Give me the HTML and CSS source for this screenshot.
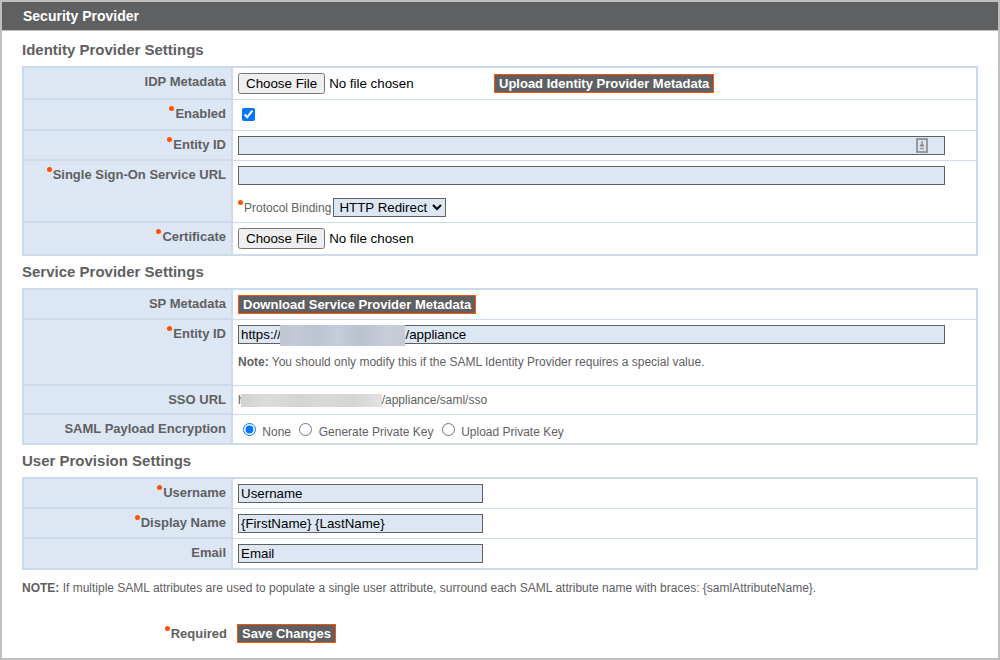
FILE: index.html
```html
<!DOCTYPE html>
<html lang="en">
<head>
<meta charset="utf-8">
<title>Security Provider</title>
<link rel="stylesheet" href="styles.css">
</head>
<body>
<main class="panel">
  <h1 class="panel-title">Security Provider</h1>
  <form class="content">
    <h2 class="section-title">Identity Provider Settings</h2>
    <div class="settings">
      <div class="row">
        <div class="name"><label for="idp-metadata">IDP Metadata</label></div>
        <div class="value inline">
          <input class="file" type="file" id="idp-metadata">
          <button class="action" type="button">Upload Identity Provider Metadata</button>
        </div>
      </div>
      <div class="row">
        <div class="name"><label class="required" for="enabled">Enabled</label></div>
        <div class="value inline"><input class="check" type="checkbox" id="enabled" checked></div>
      </div>
      <div class="row">
        <div class="name"><label class="required" for="idp-entity">Entity ID</label></div>
        <div class="value">
          <div class="field">
            <input class="text" type="text" id="idp-entity">
            <svg class="autofill" viewBox="0 0 12 15" aria-hidden="true">
              <rect x="1" y="1" width="10" height="13" fill="#dfe4ec" stroke="#85878b" stroke-width="1.6"/>
              <path d="M6 3v4" stroke="#8b8d91" stroke-width="1.4"/>
              <path d="M4 7.5h4" stroke="#77797d" stroke-width="1.6"/>
              <path d="M4 10.5h4" stroke="#a4a7ac" stroke-width="2"/>
            </svg>
          </div>
        </div>
      </div>
      <div class="row">
        <div class="name"><label class="required" for="sso-service">Single Sign-On Service URL</label></div>
        <div class="value">
          <div class="field"><input class="text" type="text" id="sso-service"></div>
          <div class="binding">
            <label class="required" for="binding">Protocol Binding</label>
            <select class="select" id="binding"><option>HTTP Redirect</option><option>HTTP POST</option></select>
          </div>
        </div>
      </div>
      <div class="row">
        <div class="name"><label class="required" for="certificate">Certificate</label></div>
        <div class="value inline"><input class="file" type="file" id="certificate"></div>
      </div>
    </div>

    <h2 class="section-title">Service Provider Settings</h2>
    <div class="settings">
      <div class="row">
        <div class="name">SP Metadata</div>
        <div class="value inline"><button class="action" type="button">Download Service Provider Metadata</button></div>
      </div>
      <div class="row">
        <div class="name"><label class="required" for="sp-entity">Entity ID</label></div>
        <div class="value">
          <div class="field">
            <input class="text" type="text" id="sp-entity" value="https://access.example.com/appliance">
            <span class="redaction"></span>
          </div>
          <p class="hint"><b>Note:</b> You should only modify this if the SAML Identity Provider requires a special value.</p>
        </div>
      </div>
      <div class="row compact">
        <div class="name">SSO URL</div>
        <div class="value url">h<span class="smudge"></span>/appliance/saml/sso</div>
      </div>
      <div class="row">
        <div class="name" id="encryption">SAML Payload Encryption</div>
        <div class="value radios" role="radiogroup" aria-labelledby="encryption">
          <input type="radio" name="enc" id="enc-none" checked>
          <label for="enc-none">None</label>
          <input type="radio" name="enc" id="enc-generate">
          <label for="enc-generate">Generate Private Key</label>
          <input type="radio" name="enc" id="enc-upload">
          <label for="enc-upload">Upload Private Key</label>
        </div>
      </div>
    </div>

    <h2 class="section-title">User Provision Settings</h2>
    <div class="settings">
      <div class="row">
        <div class="name"><label class="required" for="username">Username</label></div>
        <div class="value"><input class="text short" type="text" id="username" value="Username"></div>
      </div>
      <div class="row">
        <div class="name"><label class="required" for="display-name">Display Name</label></div>
        <div class="value"><input class="text short" type="text" id="display-name" value="{FirstName} {LastName}"></div>
      </div>
      <div class="row">
        <div class="name"><label for="email">Email</label></div>
        <div class="value"><input class="text short" type="text" id="email" value="Email"></div>
      </div>
    </div>

    <p class="note"><b>NOTE:</b> If multiple SAML attributes are used to populate a single user attribute, surround each SAML attribute name with braces: {samlAttributeName}.</p>
    <div class="footer">
      <div class="legend"><span class="required">Required</span></div>
      <button class="action" type="submit">Save Changes</button>
    </div>
  </form>
</main>
</body>
</html>
```
FILE: styles.css
```css
* {
  box-sizing: border-box;
}

body {
  margin: 0;
  background: #fff;
  color: #5f6062;
  font-family: Arial, "Liberation Sans", sans-serif;
  font-size: 12px;
  line-height: 18px;
}

p, h1, h2 {
  margin: 0;
}

input, button, select {
  font-family: inherit;
}

.panel {
  min-height: 100vh;
  border: 2px solid #bfbfbf;
}

.panel-title {
  padding: 5px 21px;
  border-bottom: 1px solid #bfbfbf;
  background: #5f6062;
  color: #fff;
  font-size: 14px;
}

.content {
  padding: 3px 20px 12px;
}

.section-title {
  padding: 7px 0;
  font-size: 15px;
}

.settings {
  border: 2px solid #ccdbec;
}

.row {
  display: grid;
  grid-template-columns: 209px 1fr;
}

.name {
  padding: 5px;
  border-right: 2px solid #ccdbec;
  border-bottom: 2px solid #ccdbec;
  background: #dde6f3;
  font-size: 13px;
  font-weight: bold;
  text-align: right;
}

.value {
  padding: 5px;
  border-bottom: 1px solid #ccdbec;
}

.row:last-child .name,
.row:last-child .value {
  border-bottom: 0;
}

.compact .name {
  padding-bottom: 4px;
}

.inline {
  display: flex;
  align-items: center;
  gap: 3px;
}

.required::before {
  content: "";
  display: inline-block;
  width: 5px;
  height: 5px;
  margin-right: 1px;
  border-radius: 50%;
  background: #ff5200;
  vertical-align: 7px;
}

.file {
  width: 253px;
  height: 21px;
  color: #000;
}

.check {
  margin: 3px 4px 4px;
}

.action {
  height: 19px;
  padding: 0 4px;
  border: 1px solid #ff5200;
  background: #5f6062;
  color: #fff;
  font-size: 13px;
  font-weight: bold;
}

.field {
  position: relative;
  margin-right: 26px;
}

.text {
  display: block;
  width: 100%;
  height: 19px;
  padding: 1px 2px;
  border: 1px solid #5f6062;
  background: #dde6f3;
  color: #000;
}

.short {
  width: 245px;
}

.autofill {
  position: absolute;
  top: 2px;
  right: 17px;
  width: 12px;
  height: 15px;
}

.binding {
  display: flex;
  align-items: center;
  gap: 2px;
  margin-top: 13px;
  height: 19px;
}

.select {
  height: 19px;
  padding: 0 1px;
  border: 1px solid #5f6062;
  background: #dde6f3;
  color: #000;
}

.redaction {
  position: absolute;
  top: 0;
  left: 42px;
  width: 125px;
  height: 21px;
  background: linear-gradient(90deg, #bfc6d1, #c3c9d6 12%, #bcc4d0 30%, #c5ccdb 45%, #bac2cd 65%, #c8cdd9 85%, #c5cad4);
}

.hint {
  margin-top: 9px;
  padding-bottom: 9px;
}

.url {
  display: flex;
  align-items: center;
}

.smudge {
  width: 141px;
  height: 13px;
  margin-left: -4px;
  background: linear-gradient(90deg, #d3d1d1, #dddbdb 20%, #d4d2d2 40%, #dad8d8 60%, #d5d3d3 80%, #e3e1e1);
}

.radios {
  padding-bottom: 0;
}

.radios input {
  margin: 3px 3px 0 5px;
}

.note {
  margin-top: 9px;
}

.footer {
  display: grid;
  grid-template-columns: 205px auto;
  justify-content: start;
  align-items: center;
  gap: 10px;
  margin-top: 27px;
}

.legend {
  font-size: 13px;
  font-weight: bold;
  text-align: right;
}
```
